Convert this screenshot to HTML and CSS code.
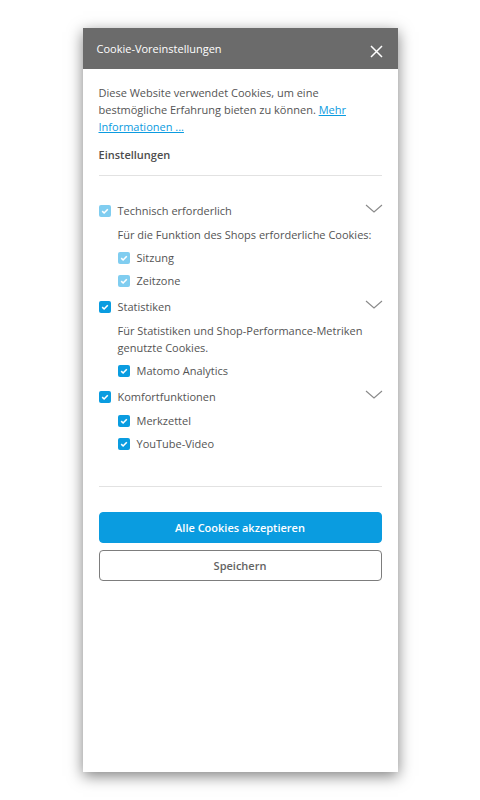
FILE: index.html
```html
<!DOCTYPE html>
<html lang="de">
<head>
<meta charset="utf-8">
<title>Cookie-Voreinstellungen</title>
<link rel="stylesheet" href="styles.css">
</head>
<body>
<div class="panel">
  <div class="header">
    <span class="title">Cookie-Voreinstellungen</span>
    <svg class="close" width="13" height="13" viewBox="0 0 13 13"><path d="M1 1L12 12M12 1L1 12" stroke="#fff" stroke-width="1.5" fill="none"/></svg>
  </div>
  <div class="body">
    <p class="intro">Diese Website verwendet Cookies, um eine bestmögliche Erfahrung bieten zu können. <a href="#">Mehr Informationen ...</a></p>
    <div class="heading">Einstellungen</div>
    <div class="divider"></div>
    <div class="groups">
      <div class="group">
        <div class="row">
          <span class="cb disabled"><svg viewBox="0 0 12 12"><path d="M3.2 6.2L5.1 8L8.8 4.2" stroke="#fff" stroke-width="1.6" fill="none"/></svg></span>
          <span class="label">Technisch erforderlich</span>
          <svg class="chev" width="18" height="9" viewBox="0 0 18 9"><path d="M1 1L9 8L17 1" stroke="#8a8a8a" stroke-width="1.1" fill="none"/></svg>
        </div>
        <div class="desc">Für die Funktion des Shops erforderliche Cookies:</div>
        <div class="row sub">
          <span class="cb disabled"><svg viewBox="0 0 12 12"><path d="M3.2 6.2L5.1 8L8.8 4.2" stroke="#fff" stroke-width="1.6" fill="none"/></svg></span>
          <span class="label">Sitzung</span>
        </div>
        <div class="row sub">
          <span class="cb disabled"><svg viewBox="0 0 12 12"><path d="M3.2 6.2L5.1 8L8.8 4.2" stroke="#fff" stroke-width="1.6" fill="none"/></svg></span>
          <span class="label">Zeitzone</span>
        </div>
      </div>
      <div class="group">
        <div class="row">
          <span class="cb"><svg viewBox="0 0 12 12"><path d="M3.2 6.2L5.1 8L8.8 4.2" stroke="#fff" stroke-width="1.6" fill="none"/></svg></span>
          <span class="label">Statistiken</span>
          <svg class="chev" width="18" height="9" viewBox="0 0 18 9"><path d="M1 1L9 8L17 1" stroke="#8a8a8a" stroke-width="1.1" fill="none"/></svg>
        </div>
        <div class="desc">Für Statistiken und Shop-Performance-Metriken genutzte Cookies.</div>
        <div class="row sub">
          <span class="cb"><svg viewBox="0 0 12 12"><path d="M3.2 6.2L5.1 8L8.8 4.2" stroke="#fff" stroke-width="1.6" fill="none"/></svg></span>
          <span class="label">Matomo Analytics</span>
        </div>
      </div>
      <div class="group">
        <div class="row">
          <span class="cb"><svg viewBox="0 0 12 12"><path d="M3.2 6.2L5.1 8L8.8 4.2" stroke="#fff" stroke-width="1.6" fill="none"/></svg></span>
          <span class="label">Komfortfunktionen</span>
          <svg class="chev" width="18" height="9" viewBox="0 0 18 9"><path d="M1 1L9 8L17 1" stroke="#8a8a8a" stroke-width="1.1" fill="none"/></svg>
        </div>
        <div class="row sub first">
          <span class="cb"><svg viewBox="0 0 12 12"><path d="M3.2 6.2L5.1 8L8.8 4.2" stroke="#fff" stroke-width="1.6" fill="none"/></svg></span>
          <span class="label">Merkzettel</span>
        </div>
        <div class="row sub">
          <span class="cb"><svg viewBox="0 0 12 12"><path d="M3.2 6.2L5.1 8L8.8 4.2" stroke="#fff" stroke-width="1.6" fill="none"/></svg></span>
          <span class="label">YouTube-Video</span>
        </div>
      </div>
    </div>
    <div class="divider bottom"></div>
    <div class="buttons">
      <button class="btn primary">Alle Cookies akzeptieren</button>
      <button class="btn secondary">Speichern</button>
    </div>
  </div>
</div>
</body>
</html>
```

FILE: styles.css
```css
html, body {
  margin: 0;
  padding: 0;
  background: #fff;
}
body {
  font-family: "Open Sans", "Noto Sans", sans-serif;
  color: #545454;
  font-size: 11px;
  line-height: 17px;
  padding-top: 28px;
  padding-bottom: 28px;
}
.panel {
  width: 315px;
  height: 744px;
  margin: 0 auto;
  background: #fff;
  box-shadow: 0 4px 14px rgba(0, 0, 0, 0.5);
}
.header {
  height: 41px;
  background: #6b6b6b;
  display: flex;
  align-items: center;
  justify-content: space-between;
  padding: 0 15px 0 14px;
}
.title {
  color: #fff;
  font-size: 11px;
}
.close {
  margin-top: 5px;
}
.body {
  padding: 15px 16px 0 16px;
}
.intro {
  margin: 0;
}
.intro a {
  color: #0b9be0;
  text-decoration: underline;
}
.heading {
  font-weight: 600;
  margin-top: 11px;
  color: #4d4d4d;
}
.divider {
  height: 1px;
  background: #e2e2e2;
  margin-top: 12px;
}
.groups {
  display: flex;
  flex-direction: column;
  gap: 9px;
  margin-top: 26px;
}
.group {
  display: flex;
  flex-direction: column;
  gap: 6px;
}
.row {
  display: flex;
  align-items: center;
  height: 17px;
}
.row.sub {
  padding-left: 19px;
}
.row.sub.first {
  margin-top: 1px;
}
.cb {
  width: 12px;
  height: 12px;
  border-radius: 2px;
  background: #0a9ce0;
  display: inline-flex;
  flex-shrink: 0;
}
.cb.disabled {
  background: #80cdf0;
}
.cb svg {
  width: 12px;
  height: 12px;
}
.label {
  margin-left: 7px;
  flex: 1;
}
.chev {
  margin-right: -1px;
  margin-top: -5px;
}
.desc {
  padding-left: 19px;
  margin-top: 1px;
}
.divider.bottom {
  margin-top: 34px;
}
.buttons {
  display: flex;
  flex-direction: column;
  gap: 7px;
  margin-top: 25px;
}
.btn {
  height: 31px;
  border-radius: 4px;
  font-family: "Open Sans", "Noto Sans", sans-serif;
  font-size: 11px;
  font-weight: 600;
  cursor: pointer;
}
.btn.primary {
  background: #0a9ce0;
  border: 1px solid #0a9ce0;
  color: #fff;
}
.btn.secondary {
  background: #fff;
  border: 1px solid #7d7d7d;
  color: #636363;
}
```
